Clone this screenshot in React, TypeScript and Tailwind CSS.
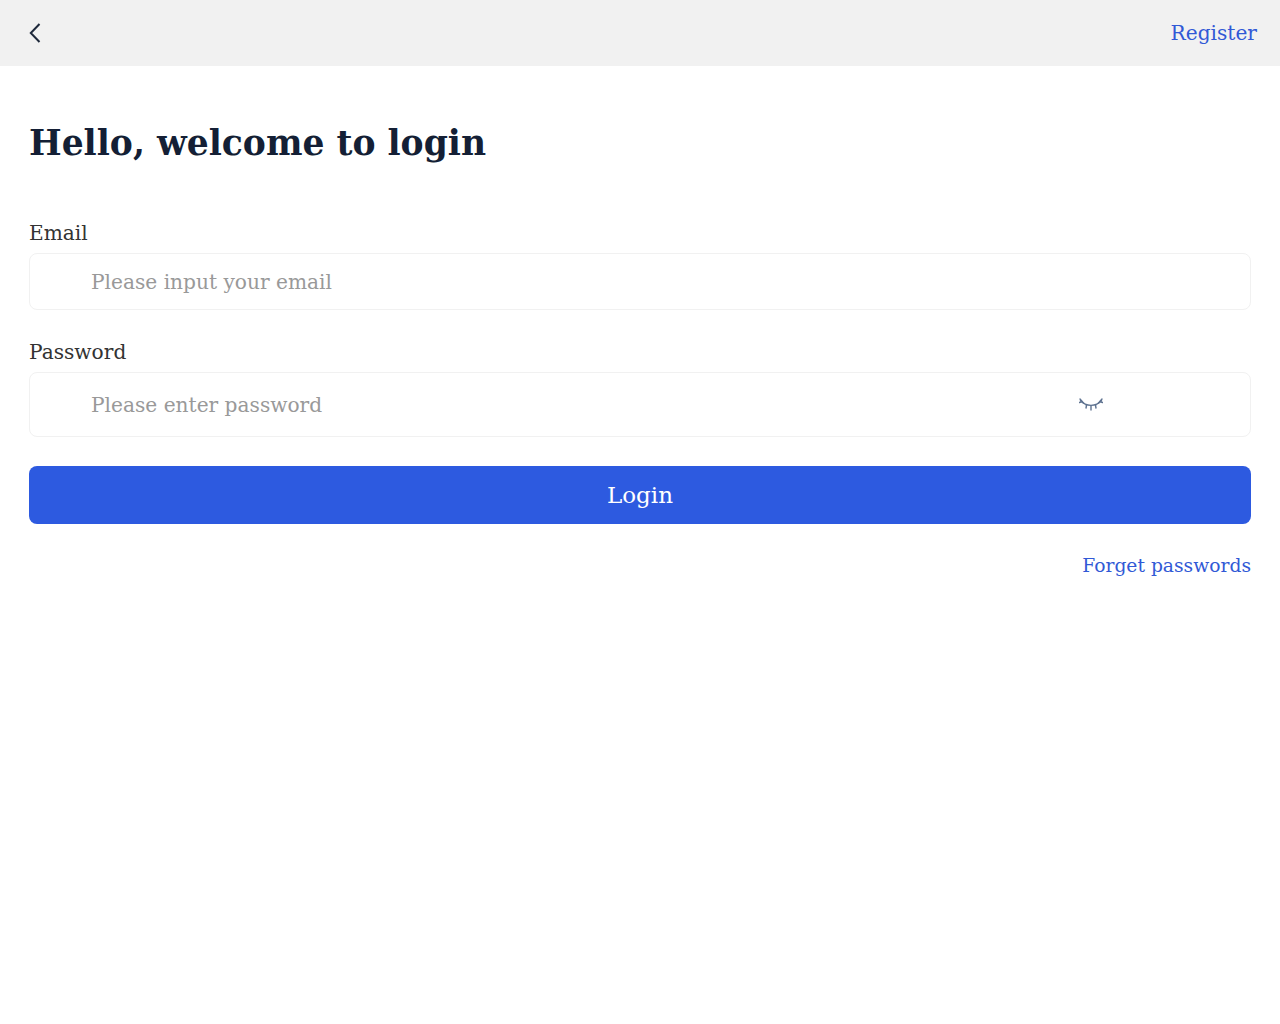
import React from "react";

const serif = "font-['DejaVu_Serif',serif]";

const ClosedEye = () => (
  <svg width="24" height="14" viewBox="0 0 24 14" fill="none" stroke="#5f7391" strokeWidth="1.4" strokeLinecap="round">
    <path d="M1.5 2.5 C 7 9, 17 9, 22.5 2.5" />
    <path d="M1 1 L4.5 5" />
    <path d="M0.5 4.5 L3 3.5" />
    <path d="M23 1 L19.5 5" />
    <path d="M23.5 4.5 L21 3.5" />
    <path d="M7.5 7.5 L7 10" />
    <path d="M12 8 L12 12" />
    <path d="M16.5 7.5 L17 10" />
  </svg>
);

const App: React.FC = () => {
  return (
    <div className={`min-h-[1024px] bg-white ${serif}`}>
      {/* Header */}
      <div className="h-[66px] bg-[#f1f1f1] flex items-center justify-between pl-[29px] pr-[23px]">
        <svg width="12" height="20" viewBox="0 0 12 20" fill="none" stroke="#1e293b" strokeWidth="2">
          <path d="M10.5 1 L1.8 10 L10.5 19" />
        </svg>
        <a className="text-[20.16px] text-[#3159d6]">Register</a>
      </div>

      <div className="px-[29px]">
        <h1 className="text-[34.56px] leading-[54px] font-bold text-[#141f35] mt-[50px]">Hello, welcome to login</h1>

        <div className="mt-[48px]">
          <label className="block text-[20.16px] leading-[30px] text-[#333333]">Email</label>
          <div className="mt-[5px] h-[57px] border border-[#f1f1f1] rounded-[8px] flex items-center pl-[61px]">
            <input
              placeholder="Please input your email"
              className="w-full pt-[2px] text-[20.16px] outline-none placeholder:text-[#999999]"
            />
          </div>
        </div>

        <div className="mt-[27px]">
          <label className="block text-[20.16px] leading-[30px] text-[#333333]">Password</label>
          <div className="mt-[5px] h-[65px] border border-[#f1f1f1] rounded-[8px] flex items-center pl-[61px] pr-[147px]">
            <input
              placeholder="Please enter password"
              className="flex-1 pt-[2px] text-[20.16px] outline-none placeholder:text-[#999999]"
            />
            <ClosedEye />
          </div>
        </div>

        <button className="mt-[29px] w-full h-[58px] bg-[#2d5ae0] rounded-[8px] text-white text-[23px]">Login</button>

        <div className="mt-[27px] flex justify-end">
          <a className="text-[18.72px] leading-[30px] text-[#3159d6]">Forget passwords</a>
        </div>
      </div>
    </div>
  );
};

export default App;
